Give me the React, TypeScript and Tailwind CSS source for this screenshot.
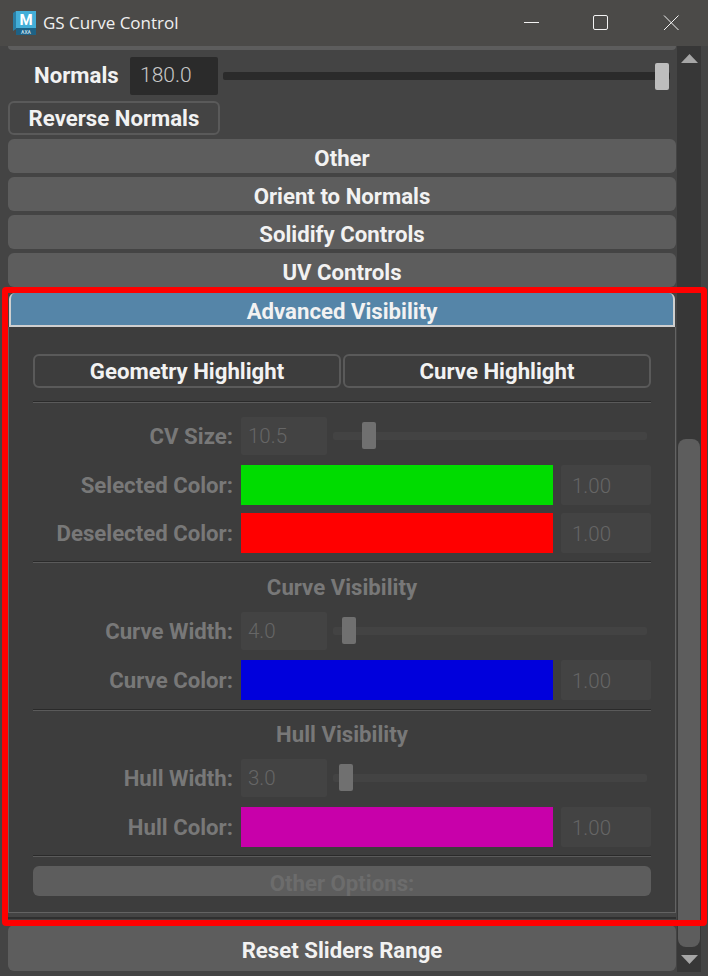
function MayaIcon() {
  return (
    <svg className="ml-[13px] shrink-0" width="24" height="24" viewBox="0 0 24 24">
      <path d="M0 2L3 0V18L0 20Z" fill="#2a7fa6" />
      <path d="M3 0H23V17H3Z" fill="#43aed8" />
      <path d="M3 17H23V24H3Z" fill="#1d6286" />
      <text x="13" y="14" textAnchor="middle" fontSize="15" fontWeight="700" fill="#ffffff" fontFamily="Roboto, sans-serif">M</text>
      <text x="13" y="22.5" textAnchor="middle" fontSize="5" fontWeight="700" fill="#bcd9e6" fontFamily="Roboto, sans-serif">AXA</text>
    </svg>
  );
}

function TitleBar() {
  return (
    <div className="h-[46px] bg-[#4b4a48] flex items-center shrink-0">
      <MayaIcon />
      <span className="ml-[6px] text-[17px] text-[#f0f0f0] font-['Open_Sans',sans-serif]">GS Curve Control</span>
      <svg className="ml-auto mr-[29px]" width="156" height="16" viewBox="0 0 156 16" fill="none" stroke="#f2f2f2" strokeWidth="1">
        <path d="M1 7.5H16" />
        <rect x="70.5" y="0.5" width="14" height="14" rx="1.5" />
        <path d="M141 0.5L155.5 15M155.5 0.5L141 15" />
      </svg>
    </div>
  );
}

function BarButton({ label, h = 'h-[34px]' }: { label: string; h?: string }) {
  return (
    <div className={`${h} w-full rounded-[6px] bg-[#5d5d5d] flex items-center justify-center pt-[5px] text-[22.2px] font-bold text-[#f2f2f2] leading-none`}>
      {label}
    </div>
  );
}

function OutlineButton({ label, className }: { label: string; className: string }) {
  return (
    <div className={`${className} h-[34px] rounded-[6px] border-2 border-[#5a5a5a] flex items-center justify-center text-[22.2px] font-bold text-[#f2f2f2] leading-none`}>
      {label}
    </div>
  );
}

function Separator({ className }: { className: string }) {
  return <div className={`${className} h-[2px] border-t border-[#2a2a2a] bg-[#5a5a5a]`} />;
}

function SliderRow({ label, value, pos }: { label: string; value: string; pos: string }) {
  return (
    <div className="flex items-center h-[38px]">
      <span className="w-[200px] pt-[1px] text-right text-[22.2px] font-bold text-[#787878] leading-none">{label}</span>
      <div className="ml-[8px] w-[86px] h-[38px] rounded-[2px] bg-[#434343] text-[20.5px] text-[#666666] flex items-center pl-[7px] font-light">
        {value}
      </div>
      <div className="relative ml-[6px] w-[314px] h-[8px] rounded-[2px] bg-[#434343]">
        <div className={`absolute top-[-10px] w-[14px] h-[27px] rounded-[2px] bg-[#707070] ${pos}`} />
      </div>
    </div>
  );
}

function ColorRow({ label, swatch }: { label: string; swatch: string }) {
  return (
    <div className="flex items-center h-[40px]">
      <span className="w-[200px] text-right text-[22.2px] font-bold text-[#787878] leading-none">{label}</span>
      <div className={`ml-[8px] w-[312px] h-[40px] ${swatch}`} />
      <div className="ml-[8px] w-[90px] h-[40px] pt-[2px] rounded-[2px] bg-[#434343] text-[20.5px] text-[#666666] flex items-center pl-[11px] font-light">
        1.00
      </div>
    </div>
  );
}

function SectionTitle({ label }: { label: string }) {
  return <div className="h-[22px] pt-[1px] flex items-center justify-center text-[22.2px] font-bold text-[#787878] leading-none">{label}</div>;
}

function AdvancedPanel() {
  return (
    <div className="mt-[6px] mx-[1px]">
      <div className="h-[34px] rounded-t-[6px] bg-[#5585a8] border-x-2 border-b-2 border-[#cfcfcf] flex items-center justify-center pt-[5px] text-[22.2px] font-bold text-[#f2f2f2] leading-none">
        Advanced Visibility
      </div>
      <div className="h-[586px] bg-[#3d3d3d] border-x border-b border-[#636363] -mx-[1px] pt-[27px]">
        <div className="flex gap-[2px] ml-[24px] w-[618px]">
          <OutlineButton label="Geometry Highlight" className="w-[308px]" />
          <OutlineButton label="Curve Highlight" className="w-[308px]" />
        </div>
        <Separator className="ml-[24px] w-[618px] mt-[13px]" />
        <div className="ml-[24px] w-[618px]">
          <div className="mt-[14px]">
            <SliderRow label="CV Size:" value="10.5" pos="left-[29px]" />
          </div>
          <div className="mt-[10px]">
            <ColorRow label="Selected Color:" swatch="bg-[#00dc00]" />
          </div>
          <div className="mt-[8px]">
            <ColorRow label="Deselected Color:" swatch="bg-[#ff0000]" />
          </div>
          <Separator className="mt-[8px]" />
          <div className="mt-[13px]">
            <SectionTitle label="Curve Visibility" />
          </div>
          <div className="mt-[14px]">
            <SliderRow label="Curve Width:" value="4.0" pos="left-[9px]" />
          </div>
          <div className="mt-[10px]">
            <ColorRow label="Curve Color:" swatch="bg-[#0000dc]" />
          </div>
          <Separator className="mt-[9px]" />
          <div className="mt-[12px]">
            <SectionTitle label="Hull Visibility" />
          </div>
          <div className="mt-[14px]">
            <SliderRow label="Hull Width:" value="3.0" pos="left-[6px]" />
          </div>
          <div className="mt-[10px]">
            <ColorRow label="Hull Color:" swatch="bg-[#c800aa]" />
          </div>
          <Separator className="mt-[8px]" />
          <div className="mt-[9px] h-[30px] pt-[5px] rounded-[6px] bg-[#5d5d5d] flex items-center justify-center text-[22.2px] font-bold text-[#6c6c6c] leading-none">
            Other Options:
          </div>
        </div>
      </div>
      <div className="h-[2px] mt-[4px] -mx-[1px] bg-[#2f2f2f]" />
    </div>
  );
}

function ScrollBar() {
  return (
    <div className="w-[24px] ml-[1px] bg-[#373737] flex flex-col items-center shrink-0">
      <svg className="mt-[8px] shrink-0" width="17" height="9" viewBox="0 0 17 9">
        <path d="M8.5 0L17 9H0Z" fill="#a6a6a6" />
      </svg>
      <div className="mt-[376px] w-[22px] h-[508px] shrink-0 rounded-[8px] bg-[#5d5d5d]" />
      <svg className="mt-[8px] shrink-0" width="17" height="9" viewBox="0 0 17 9">
        <path d="M0 0H17L8.5 9Z" fill="#a6a6a6" />
      </svg>
    </div>
  );
}

export default function App() {
  return (
    <div className="relative w-[708px] h-[976px] bg-[#444444] flex flex-col overflow-hidden font-['Roboto',sans-serif]">
      <TitleBar />
      <div className="flex h-[930px] shrink-0 pl-[8px] pr-[8px] pb-[4px]">
        <div className="w-[668px] shrink-0">
          <div className="h-[4px] rounded-b-[6px] bg-[#5d5d5d]" />
          <div className="flex items-center h-[38px] mt-[7px]">
            <span className="ml-[26px] w-[84px] pb-[1px] text-[22.2px] font-bold text-[#f2f2f2] leading-none">Normals</span>
            <div className="ml-[12px] w-[88px] h-[38px] rounded-[2px] bg-[#2b2b2b] text-[21px] font-light text-[#c8c8c8] flex items-center pl-[10px]">
              180.0
            </div>
            <div className="relative ml-[5px] w-[447px] h-[8px] rounded-[2px] bg-[#2b2b2b]">
              <div className="absolute right-[1px] top-[-9px] w-[14px] h-[27px] rounded-[2px] bg-[#bdbdbd]" />
            </div>
          </div>
          <div className="mt-[6px]">
            <OutlineButton label="Reverse Normals" className="w-[212px]" />
          </div>
          <div className="mt-[4px] flex flex-col gap-[4px]">
            <BarButton label="Other" />
            <BarButton label="Orient to Normals" />
            <BarButton label="Solidify Controls" />
            <BarButton label="UV Controls" />
          </div>
          <AdvancedPanel />
          <div className="mt-[6px]">
            <BarButton label="Reset Sliders Range" h="h-[46px]" />
          </div>
        </div>
        <ScrollBar />
      </div>
      {/* Red annotation frame over the panel */}
      <div className="absolute left-[2px] top-[287px] w-[705px] h-[639px] border-[6px] border-[#ff0000] rounded-[4px]" />
    </div>
  );
}
